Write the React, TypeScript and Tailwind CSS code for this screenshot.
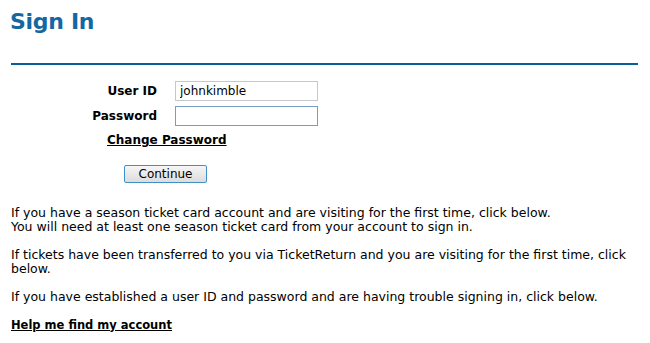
export default function App() {
  return (
    <div className="w-[650px] h-[343px] bg-white text-black overflow-hidden" style={{ fontFamily: '"DejaVu Sans", Verdana, sans-serif' }}>
      <div className="pl-[10px] pt-[8px]">
        <h1 className="text-[22px] leading-[28px] font-bold text-[#1467a2] tracking-[-0.3px]">Sign In</h1>
      </div>
      <div className="ml-[11px] mr-[12px] mt-[27px] h-[2px] bg-[#0b5f98]" />
      <div className="mt-[15px] text-[11px]">
        <div className="flex items-center h-[22px]">
          <label className="w-[157px] text-right font-bold text-[12px]">User ID</label>
          <input defaultValue="johnkimble" className="ml-[18px] w-[143px] h-[20px] border border-[#c8c8c8] px-[4px] text-[12px] outline-none" />
        </div>
        <div className="flex items-center h-[22px] mt-[3px]">
          <label className="w-[157px] text-right font-bold text-[12px]">Password</label>
          <input type="password" className="ml-[18px] w-[143px] h-[20px] border border-[#7a9cc4] px-[4px] text-[12px] outline-none" />
        </div>
        <div className="pl-[107px] mt-[4px] h-[16px]">
          <a className="font-bold underline text-[12px]">Change Password</a>
        </div>
        <div className="pl-[124px] mt-[18px]">
          <button className="w-[83px] h-[18px] border border-[#3f8fc9] rounded-[2px] bg-gradient-to-b from-[#f6f6f6] to-[#dcdcdc] text-[12px] leading-[16px]">Continue</button>
        </div>
      </div>
      <div className="pl-[11px] pr-[12px] mt-[22px] text-[12.5px] leading-[14px]">
        <p>If you have a season ticket card account and are visiting for the first time, click below.<br />You will need at least one season ticket card from your account to sign in.</p>
        <p className="mt-[14px]">If tickets have been transferred to you via TicketReturn and you are visiting for the first time, click below.</p>
        <p className="mt-[14px]">If you have established a user ID and password and are having trouble signing in, click below.</p>
        <p className="mt-[14px]"><a className="font-bold underline text-[11.5px]">Help me find my account</a></p>
      </div>
    </div>
  );
}
